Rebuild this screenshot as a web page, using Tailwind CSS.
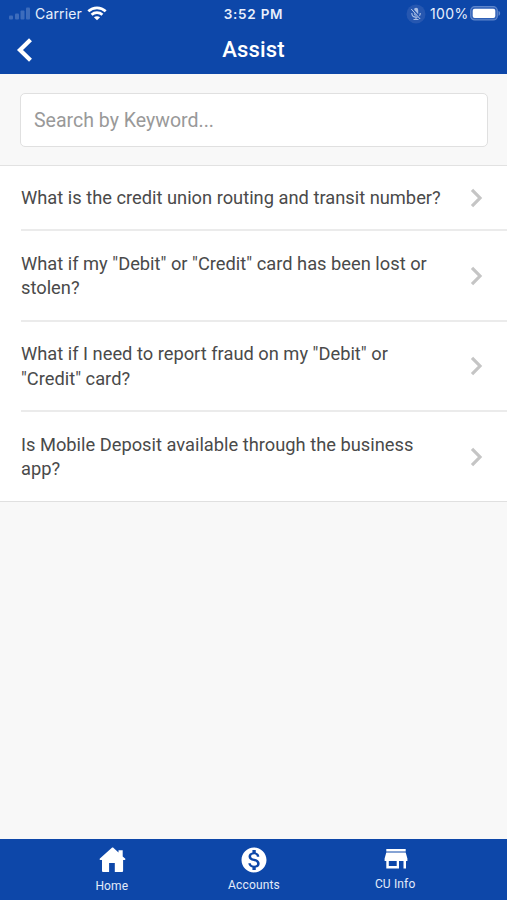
<!DOCTYPE html>
<html lang="en">
<head>
<meta charset="utf-8">
<title>Assist</title>
<script src="https://cdn.jsdelivr.net/npm/@tailwindcss/browser@4"></script>
</head>
<body class="bg-[#f8f8f8]">
<div class="w-[507px] h-[900px] flex flex-col overflow-hidden font-[Roboto,sans-serif] text-[#4a4a4a]">
  <header class="h-[74px] shrink-0 bg-[#0d47a9] text-white">
    <div class="h-[27px] grid grid-cols-3 items-center font-[Inter,sans-serif] text-[14px] leading-none text-[#e8effc]">
      <div class="flex items-center pl-[9px]">
        <svg class="w-[22px] h-[13px]" viewBox="0 0 22 13" fill="#3d6cbc"><rect y="8.500" width="4" height="4" rx="1"/><rect x="6" y="6.500" width="4" height="6" rx="1"/><rect x="11.500" y="3.500" width="4" height="9" rx="1"/><rect x="17" y=".5" width="4" height="12" rx="1"/></svg>
        <span class="ml-[4px] w-[47px] whitespace-nowrap tracking-[0.15px]">Carrier</span>
        <svg class="ml-[5px] w-[20px] h-[15px]" viewBox="0 0 20 15" fill="none" stroke="white" stroke-width="2.700"><path d="M1.300 5.300C6.300.7 13.700.7 18.700 5.300M4.600 8.700c3-2.800 7.800-2.800 10.800 0"/><path d="M6.900 11.300c1.800-1.500 4.400-1.500 6.200 0l-3.100 3z" fill="white" stroke="none"/></svg>
      </div>
      <div class="pt-[2px] text-center font-semibold text-[13.500px] tracking-[0.75px]">3:52 PM</div>
      <div class="flex items-center justify-end pr-[6px]">
        <svg class="w-[20px] h-[20px]" viewBox="0 0 20 20" fill="none"><circle cx="10" cy="10" r="9.500" fill="#2657b0"/><rect x="8" y="3.800" width="4.200" height="8" rx="2.100" fill="#a9bfe6"/><path d="M5.800 9c0 5.500 8.500 5.500 8.500 0M10 13v2.500M7.500 15.500h5" stroke="#a9bfe6" stroke-width="1.100"/><path d="M5.500 4.500l9.500 10.500" stroke="#2657b0" stroke-width="2.200"/><path d="M5.200 5l9 10" stroke="#b9caea"/></svg>
        <span class="ml-[4px] w-[40px] whitespace-nowrap tracking-[0.4px]">100%</span>
        <svg class="w-[31px] h-[15px]" viewBox="0 0 31 15"><rect x=".7" y=".7" width="26.600" height="13.200" rx="4" fill="#2f60b7" stroke="#5f86cb" stroke-width="1.200"/><rect x="2.700" y="2.700" width="22.600" height="9.200" rx="2" fill="white"/><path d="M28.500 5c2.200.6 2.200 4 0 4.800z" fill="#5f86cb"/></svg>
      </div>
    </div>
    <div class="h-[46px] grid grid-cols-[60px_1fr_60px] items-center">
      <svg class="ml-[15px] w-[20px] h-[28px]" viewBox="0 0 20 28" fill="none" stroke="white" stroke-width="4.200"><path d="M15.500 3.800L5 14l10.500 10.200"/></svg>
      <h1 class="text-center text-[22px] font-medium leading-none tracking-[0.15px]">Assist</h1>
    </div>
  </header>
  <div class="h-[92px] shrink-0 pt-[19px] px-[20px] border-b border-[#e2e2e2]">
    <input class="block w-[468px] h-[54px] rounded-[5px] border border-[#e0e0e0] bg-white px-[13px] text-[19.550px] text-[#999] placeholder:text-[#999] outline-none" placeholder="Search by Keyword..." aria-label="Search">
  </div>
  <main class="shrink-0 bg-white border-b border-[#e0e0e0] pl-[21px] text-[18.290px] leading-[24.500px]">
    <div class="h-[65px] flex items-center justify-between pr-[24px] border-b-2 border-[#ebebeb]">
      <p class="whitespace-nowrap pt-[1px]">What is the credit union routing and transit number?</p>
      <svg class="w-[14px] h-[20px] shrink-0" viewBox="0 0 14 20" fill="none" stroke="#c5c5c5" stroke-width="3.200"><path d="M3 1.800L11 10l-8 8.200"/></svg>
    </div>
    <div class="h-[91px] flex items-center justify-between pr-[24px] border-b-2 border-[#ebebeb]">
      <p class="whitespace-nowrap pt-[1px]">What if my "Debit" or "Credit" card has been lost or<br>stolen?</p>
      <svg class="w-[14px] h-[20px] shrink-0" viewBox="0 0 14 20" fill="none" stroke="#c5c5c5" stroke-width="3.200"><path d="M3 1.800L11 10l-8 8.200"/></svg>
    </div>
    <div class="h-[90px] flex items-center justify-between pr-[24px] border-b-2 border-[#ebebeb]">
      <p class="whitespace-nowrap pt-[1px]">What if I need to report fraud on my "Debit" or<br>"Credit" card?</p>
      <svg class="w-[14px] h-[20px] shrink-0" viewBox="0 0 14 20" fill="none" stroke="#c5c5c5" stroke-width="3.200"><path d="M3 1.800L11 10l-8 8.200"/></svg>
    </div>
    <div class="h-[89px] flex items-center justify-between pr-[24px]">
      <p class="whitespace-nowrap pt-[1px]">Is Mobile Deposit available through the business<br>app?</p>
      <svg class="w-[14px] h-[20px] shrink-0" viewBox="0 0 14 20" fill="none" stroke="#c5c5c5" stroke-width="3.200"><path d="M3 1.800L11 10l-8 8.200"/></svg>
    </div>
  </main>
  <nav class="mt-auto h-[61px] shrink-0 bg-[#0d47a9] px-[41px] grid grid-cols-3 text-[12px] leading-[14px] text-[#e3ebf9] tracking-[0.150px]">
    <a class="flex flex-col items-center pt-[8px]">
      <svg class="w-[28px] h-[27px] translate-x-[1px]" viewBox="0 0 28 27" fill="white"><path d="M12.600 1L.9 11.600c-.6.600-.3 1.400.5 1.400H3v10.700c0 .9.500 1.400 1.400 1.400h5.700v-9h5.700v9h6.900c.9 0 1.400-.5 1.400-1.400V13h1.500c.8 0 1.100-.8.500-1.400L23.700 9.400V3.200h-4.200v2.300L14.600 1c-.7-.6-1.300-.6-2 0z"/></svg>
      <span class="mt-[5px]">Home</span>
    </a>
    <a class="flex flex-col items-center pt-[6px]">
      <svg class="w-[30px] h-[30px] translate-x-[1px]" viewBox="0 0 24 24" fill="white"><path d="M12 2C6.480 2 2 6.480 2 12s4.480 10 10 10 10-4.480 10-10S17.520 2 12 2zm1.410 16.090V20h-2.670v-1.930c-1.710-.36-3.160-1.460-3.270-3.400h1.960c.1 1.050.82 1.870 2.650 1.870 1.960 0 2.400-.98 2.400-1.590 0-.83-.44-1.610-2.670-2.140-2.480-.6-4.180-1.620-4.180-3.670 0-1.720 1.390-2.840 3.110-3.210V4h2.670v1.950c1.860.45 2.790 1.860 2.850 3.390H14.300c-.05-1.110-.64-1.870-2.220-1.870-1.500 0-2.400.68-2.400 1.640 0 .84.650 1.390 2.670 1.910s4.180 1.390 4.180 3.910c-.01 1.830-1.380 2.830-3.120 3.160z"/></svg>
      <span class="mt-[3px] translate-x-[0.500px]">Accounts</span>
    </a>
    <a class="flex flex-col items-center pt-[9px]">
      <svg class="w-[24px] h-[22px] translate-x-[1px]" viewBox="0 0 24 22" fill="white"><path d="M2.300 1h19.400v2.600H2.300zM2.300 4.600h19.400L23.400 10.500v2.500H22v7.500h-2.500V13h-4.500v7.500H2.300V13H.6v-2.500zM4.800 13v5h7.900v-5z" fill-rule="evenodd"/></svg>
      <span class="mt-[7px]">CU Info</span>
    </a>
  </nav>
</div>
</body>
</html>
